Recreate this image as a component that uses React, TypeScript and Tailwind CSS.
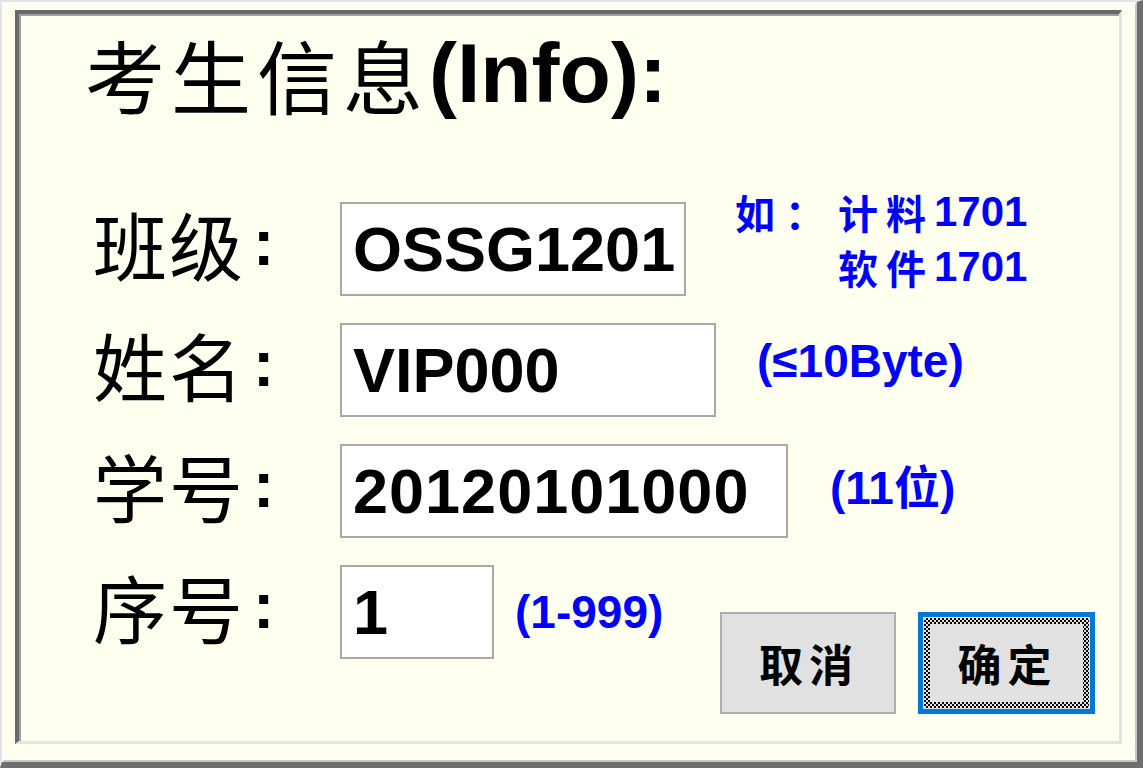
const cjk = "font-['Noto_Sans_CJK_SC',sans-serif]";
const latin = "font-['Liberation_Sans','Noto_Sans_CJK_SC',sans-serif]";

function Label({ text }: { text: string }) {
  return (
    <div className="w-[247px] shrink-0 flex items-center -mt-[12px]">
      <span className={`${cjk} text-[74px] leading-none text-black tracking-[2px]`}>{text}</span>
      <span className={`${latin} text-[64px] leading-none font-bold text-black ml-[8px]`}>:</span>
    </div>
  );
}

function Field({ value, width, spaced }: { value: string; width: string; spaced?: boolean }) {
  return (
    <div className={`${width} h-full shrink-0 bg-white border-2 border-[#a8a8a8] flex items-center pl-[11px]`}>
      <span className={`${latin} text-[63px] font-bold leading-none text-black ${spaced ? 'tracking-[1px]' : ''}`}>{value}</span>
    </div>
  );
}

const hint = `${latin} font-bold text-[#0000ff] leading-none`;

export default function App() {
  return (
    <div className="w-[1143px] h-[768px] bg-[#fffff0] border-t-2 border-l-2 border-t-[#e3e3e3] border-l-[#e3e3e3] border-r-[6px] border-b-[6px] border-r-[#6e6e6e] border-b-[#6e6e6e]">
      <div className="h-full border-t-2 border-l-2 border-t-white border-l-white border-r-2 border-b-2 border-r-[#c8c8c8] border-b-[#c8c8c8] pt-[6px] pl-[11px] pr-[13px] pb-[16px]">
        <div className="h-full border-t-4 border-l-4 border-t-[#696969] border-l-[#696969] border-r-[3px] border-b-[3px] border-r-[#e3e3e3] border-b-[#e3e3e3]">
          <div className="h-full border-t-2 border-l-2 border-t-[#a0a0a0] border-l-[#a0a0a0] flex flex-col">
            <div className="mt-[7px] h-[100px] pl-[64px] flex items-center text-black whitespace-nowrap">
              <span className={`${cjk} text-[80px] leading-none tracking-[6px]`}>考生信息</span>
              <span className={`${latin} text-[84px] leading-none font-bold`}>(Info):</span>
            </div>

            <div className="mt-[79px] pl-[72px] pr-[24px] flex flex-col gap-[27px]">
              <div className="h-[94px] flex items-center">
                <Label text="班级" />
                <Field value="OSSG1201" width="w-[346px]" />
                <div className={`${hint} ml-[49px] -mt-[20px] flex flex-col gap-[13px]`}>
                  <div className="flex items-center">
                    <span className={`${cjk} font-bold text-[40px] w-[103px] tracking-[10px]`}>如：</span>
                    <span className={`${cjk} font-bold text-[40px] tracking-[8px]`}>计料</span>
                    <span className="text-[42px]">1701</span>
                  </div>
                  <div className="flex items-center pl-[103px]">
                    <span className={`${cjk} font-bold text-[40px] tracking-[8px]`}>软件</span>
                    <span className="text-[42px]">1701</span>
                  </div>
                </div>
              </div>

              <div className="h-[94px] flex items-center">
                <Label text="姓名" />
                <Field value="VIP000" width="w-[376px]" />
                <span className={`${hint} text-[46px] ml-[41px] -mt-[18px]`}>(≤10Byte)</span>
              </div>

              <div className="h-[94px] flex items-center">
                <Label text="学号" />
                <Field value="20120101000" width="w-[448px]" spaced />
                <span className={`${hint} text-[46px] ml-[42px] -mt-[6px]`}>(11位)</span>
              </div>

              <div className="h-[94px] flex items-center">
                <Label text="序号" />
                <Field value="1" width="w-[154px]" />
                <span className={`${hint} text-[46px] ml-[21px]`}>(1-999)</span>
                <div className="ml-auto self-start mt-[47px] flex gap-[22px]">
                  <div className="w-[176px] h-[102px] bg-[#e1e1e1] border-2 border-[#adadad] flex items-center justify-center">
                    <span className={`${cjk} font-bold text-[44px] leading-none tracking-[6px] pl-[2px] text-black`}>取消</span>
                  </div>
                  <div className="w-[177px] h-[102px] border-[5px] border-[#0078d7] bg-[#e1e1e1] p-[1px]">
                    <div className="h-full p-[6px] bg-[image:repeating-conic-gradient(#000_0%_25%,#e1e1e1_0%_50%)] bg-[length:4px_4px]">
                      <div className="h-full bg-[#e1e1e1] flex items-center justify-center">
                        <span className={`${cjk} font-bold text-[44px] leading-none tracking-[6px] pl-[2px] text-black`}>确定</span>
                      </div>
                    </div>
                  </div>
                </div>
              </div>
            </div>
          </div>
        </div>
      </div>
    </div>
  );
}
